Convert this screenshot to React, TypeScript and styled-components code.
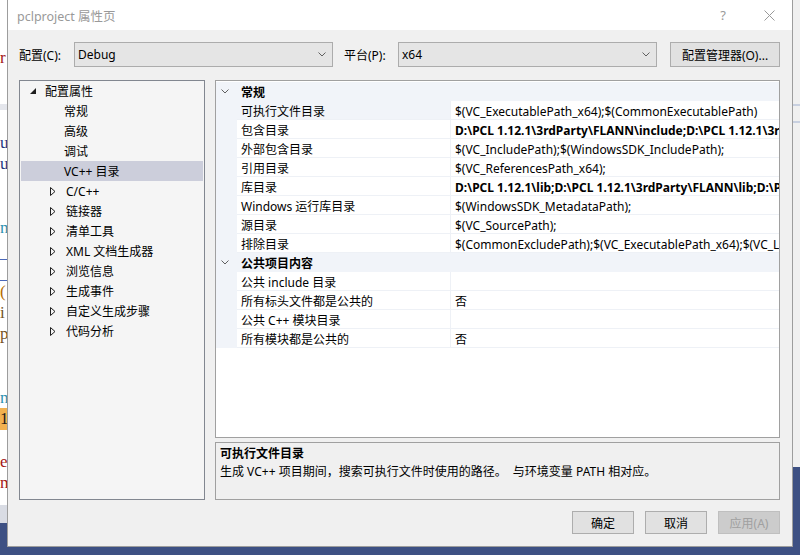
import * as React from 'react';
import styled, { createGlobalStyle } from 'styled-components';

const GlobalStyle = createGlobalStyle`
  html, body {
    margin: 0;
    padding: 0;
  }
  body {
    width: 800px;
    height: 555px;
    overflow: hidden;
    font-family: 'Noto Sans', 'Noto Sans CJK SC', sans-serif;
    font-size: 12px;
    color: #000;
  }
`;

const Screen = styled.div`
  width: 800px;
  height: 555px;
  display: grid;
  grid-template-columns: 7px 786px 7px;
  grid-template-rows: 547px 8px;
  background: #3d5083;
  overflow: hidden;
`;

// the code editor showing behind the dialog on the left
const EditorPeek = styled.div`
  display: flex;
  flex-direction: column;
  padding-top: 47px;
  overflow: hidden;
  background: linear-gradient(
    to bottom,
    #ffffff 0,
    #ffffff 104px,
    #e4e6ec 104px,
    #e4e6ec 110px,
    #ffffff 110px,
    #ffffff 505px,
    #d9dce4 505px,
    #d9dce4 523px,
    #3d5083 523px
  );
`;

const CodeLine = styled.div<{ $color?: string; $mark?: boolean; $rule?: boolean }>`
  flex: 0 0 21.25px;
  height: 21.25px;
  line-height: 21.25px;
  font-family: 'Liberation Serif', serif;
  font-size: 17px;
  color: ${p => p.$color || '#000'};
  background: ${p => (p.$mark ? '#f2b14f' : 'transparent')};
  box-shadow: ${p => (p.$rule ? 'inset 0 -1px 0 #4a67b8' : 'none')};
  white-space: nowrap;
`;

const DesktopEdge = styled.div`
  background: linear-gradient(
    to bottom,
    #f0f0f0 0,
    #f0f0f0 104px,
    #c8d0e0 104px,
    #c8d0e0 106px,
    #f0f0f0 106px,
    #f0f0f0 121px,
    #c8d0e0 121px,
    #c8d0e0 123px,
    #f0f0f0 123px,
    #f0f0f0 467px,
    #3d5083 467px
  );
`;

const Dialog = styled.div`
  box-sizing: border-box;
  display: flex;
  flex-direction: column;
  background: #f0f0f0;
  border: 1px solid #9d9d9d;
  border-top: none;
`;

const TitleBar = styled.div`
  height: 30px;
  flex: 0 0 30px;
  display: flex;
  align-items: center;
  background: #fff;
  padding-left: 9px;
`;

const Title = styled.div`
  flex: 1;
  font-size: 12.5px;
  color: #999;
`;

const CaptionButton = styled.div`
  width: 46px;
  height: 30px;
  display: flex;
  align-items: center;
  justify-content: center;
  color: #999;
  font-size: 13px;
`;

const Body = styled.div`
  flex: 1;
  display: flex;
  flex-direction: column;
  padding: 12px 12px 0 11px;
`;

const Toolbar = styled.div`
  display: flex;
  align-items: center;
  height: 25px;
`;

const FieldLabel = styled.div<{ $width: number; $gap?: number }>`
  width: ${p => p.$width}px;
  margin-left: ${p => p.$gap || 0}px;
  white-space: nowrap;
`;

const Combo = styled.div`
  box-sizing: border-box;
  width: 259px;
  height: 25px;
  display: flex;
  align-items: center;
  justify-content: space-between;
  padding: 0 6px 0 3px;
  background: #e5e5e5;
  border: 1px solid #acacac;
`;

const Button = styled.div<{ $width: number; $height?: number; $gap?: number; $disabled?: boolean }>`
  box-sizing: border-box;
  width: ${p => p.$width}px;
  height: ${p => p.$height || 25}px;
  margin-left: ${p => p.$gap || 0}px;
  display: flex;
  align-items: center;
  justify-content: center;
  background: ${p => (p.$disabled ? '#cccccc' : '#e1e1e1')};
  border: 1px solid ${p => (p.$disabled ? '#bfbfbf' : '#adadad')};
  color: ${p => (p.$disabled ? '#a0a0a0' : '#000')};
  white-space: nowrap;
`;

const Main = styled.div`
  margin-top: 13px;
  height: 420px;
  display: flex;
  gap: 10px;
`;

const Tree = styled.div`
  box-sizing: border-box;
  width: 186px;
  border: 1px solid #828790;
  background: #f5f5f5;
  padding: 0 1px;
`;

const TreeItem = styled.div<{ $indent: number; $selected?: boolean }>`
  height: 20px;
  display: flex;
  align-items: center;
  padding-left: ${p => p.$indent}px;
  background: ${p => (p.$selected ? '#cccedb' : 'transparent')};
  white-space: nowrap;
`;

const Expander = styled.div`
  width: 16px;
  height: 20px;
  display: flex;
  align-items: center;
`;

const RightColumn = styled.div`
  flex: 1;
  display: flex;
  flex-direction: column;
  gap: 4px;
`;

const PropGrid = styled.div`
  box-sizing: border-box;
  height: 358px;
  border: 1px solid #a0a0a0;
  background: #fff;
  padding-top: 1px;
  overflow: hidden;
`;

const CategoryRow = styled.div`
  height: 19px;
  display: flex;
  align-items: center;
  background: #f1f4f9;
  font-weight: bold;
`;

const CategoryToggle = styled.div`
  width: 25px;
  display: flex;
  align-items: center;
  padding-left: 5px;
  box-sizing: border-box;
`;

const PropRow = styled.div`
  height: 19px;
  display: grid;
  grid-template-columns: 21px 214px 1fr;
`;

const Gutter = styled.div`
  background: #f1f4f9;
`;

const NameCell = styled.div<{ $selected?: boolean }>`
  box-sizing: border-box;
  padding: 3px 0 0 4px;
  line-height: 16px;
  background: ${p => (p.$selected ? '#f1f4f9' : '#fff')};
  border-bottom: 1px solid #eef1f6;
  border-right: 1px solid #eef1f6;
  white-space: nowrap;
  overflow: hidden;
`;

const ValueCell = styled.div<{ $bold?: boolean }>`
  box-sizing: border-box;
  padding: 3px 0 0 4px;
  line-height: 16px;
  border-bottom: 1px solid #eef1f6;
  font-weight: ${p => (p.$bold ? 'bold' : 'normal')};
  white-space: nowrap;
  overflow: hidden;
`;

const Description = styled.div`
  box-sizing: border-box;
  height: 58px;
  border: 1px solid #a0a0a0;
  background: #f0f0f0;
  padding: 2px 4px;
  line-height: 18px;
`;

const DescTitle = styled.div`
  font-weight: bold;
`;

const DescText = styled.div`
  white-space: pre;
`;

const Footer = styled.div`
  display: flex;
  justify-content: flex-end;
  gap: 11px;
  padding-top: 11px;
`;

const ChevronDown = ({ size = 8 }: { size?: number }) => (
  <svg width={size} height={size / 2 + 1} viewBox="0 0 8 5">
    <path d="M0.5 0.5 L4 4 L7.5 0.5" fill="none" stroke="#606060" strokeWidth="1" />
  </svg>
);

const CollapsedArrow = () => (
  <svg width="6" height="9" viewBox="0 0 6 9">
    <path d="M0.5 0.5 L5 4.5 L0.5 8.5 Z" fill="none" stroke="#1e1e1e" strokeWidth="1" />
  </svg>
);

const ExpandedArrow = () => (
  <svg width="7" height="7" viewBox="0 0 7 7" style={{ marginLeft: 1 }}>
    <path d="M6 0 L6 6 L0 6 Z" fill="#1e1e1e" />
  </svg>
);

const CloseGlyph = () => (
  <svg width="11" height="11" viewBox="0 0 11 11">
    <path d="M0.5 0.5 L10.5 10.5 M10.5 0.5 L0.5 10.5" stroke="#999" strokeWidth="1" />
  </svg>
);

const codeLines: { ch: string; color?: string; mark?: boolean; rule?: boolean }[] = [
  { ch: 'r', color: '#a31515' },
  { ch: '' },
  { ch: '' },
  { ch: '' },
  { ch: 'u', color: '#1f377f' },
  { ch: 'u', color: '#1f377f' },
  { ch: '' },
  { ch: '' },
  { ch: 'n', color: '#2b91af' },
  { ch: '', rule: true },
  { ch: '', rule: true },
  { ch: '(', color: '#b36b00' },
  { ch: 'i', color: '#74531f' },
  { ch: 'p', color: '#74531f' },
  { ch: '' },
  { ch: '' },
  { ch: 'n', color: '#2b91af' },
  { ch: '1', color: '#1e1e1e', mark: true },
  { ch: '' },
  { ch: 'e', color: '#a31515' },
  { ch: 'm', color: '#a31515' },
];

const treeChildren = ['常规', '高级', '调试', 'VC++ 目录'];
const treeGroups = [
  'C/C++',
  '链接器',
  '清单工具',
  'XML 文档生成器',
  '浏览信息',
  '生成事件',
  '自定义生成步骤',
  '代码分析',
];

type Prop = { name: string; value: string; bold?: boolean };

const generalProps: Prop[] = [
  { name: '可执行文件目录', value: '$(VC_ExecutablePath_x64);$(CommonExecutablePath)' },
  {
    name: '包含目录',
    value: 'D:\\PCL 1.12.1\\3rdParty\\FLANN\\include;D:\\PCL 1.12.1\\3rdParty\\Boost\\include',
    bold: true,
  },
  { name: '外部包含目录', value: '$(VC_IncludePath);$(WindowsSDK_IncludePath);' },
  { name: '引用目录', value: '$(VC_ReferencesPath_x64);' },
  {
    name: '库目录',
    value: 'D:\\PCL 1.12.1\\lib;D:\\PCL 1.12.1\\3rdParty\\FLANN\\lib;D:\\PCL 1.12.1\\3rdParty',
    bold: true,
  },
  { name: 'Windows 运行库目录', value: '$(WindowsSDK_MetadataPath);' },
  { name: '源目录', value: '$(VC_SourcePath);' },
  {
    name: '排除目录',
    value: '$(CommonExcludePath);$(VC_ExecutablePath_x64);$(VC_LibraryPath_x64)',
  },
];

const publicProps: Prop[] = [
  { name: '公共 include 目录', value: '' },
  { name: '所有标头文件都是公共的', value: '否' },
  { name: '公共 C++ 模块目录', value: '' },
  { name: '所有模块都是公共的', value: '否' },
];

const Category = ({ title, props, selected }: { title: string; props: Prop[]; selected?: string }) => (
  <>
    <CategoryRow>
      <CategoryToggle>
        <ChevronDown />
      </CategoryToggle>
      {title}
    </CategoryRow>
    {props.map(p => (
      <PropRow key={p.name}>
        <Gutter />
        <NameCell $selected={p.name === selected}>{p.name}</NameCell>
        <ValueCell $bold={p.bold}>{p.value}</ValueCell>
      </PropRow>
    ))}
  </>
);

export default function App() {
  return (
    <>
      <GlobalStyle />
      <Screen>
        <EditorPeek>
          {codeLines.map((l, i) => (
            <CodeLine key={i} $color={l.color} $mark={l.mark} $rule={l.rule}>
              {l.ch}
            </CodeLine>
          ))}
        </EditorPeek>

        <Dialog>
          <TitleBar>
            <Title>pclproject 属性页</Title>
            <CaptionButton>?</CaptionButton>
            <CaptionButton>
              <CloseGlyph />
            </CaptionButton>
          </TitleBar>

          <Body>
            <Toolbar>
              <FieldLabel $width={55}>配置(C):</FieldLabel>
              <Combo>
                <span>Debug</span>
                <ChevronDown />
              </Combo>
              <FieldLabel $width={54} $gap={11}>
                平台(P):
              </FieldLabel>
              <Combo>
                <span>x64</span>
                <ChevronDown />
              </Combo>
              <Button $width={110} $gap={13}>
                配置管理器(O)...
              </Button>
            </Toolbar>

            <Main>
              <Tree>
                <TreeItem $indent={8}>
                  <Expander>
                    <ExpandedArrow />
                  </Expander>
                  配置属性
                </TreeItem>
                {treeChildren.map(t => (
                  <TreeItem key={t} $indent={43} $selected={t === 'VC++ 目录'}>
                    {t}
                  </TreeItem>
                ))}
                {treeGroups.map(t => (
                  <TreeItem key={t} $indent={29}>
                    <Expander>
                      <CollapsedArrow />
                    </Expander>
                    {t}
                  </TreeItem>
                ))}
              </Tree>

              <RightColumn>
                <PropGrid>
                  <Category title="常规" props={generalProps} selected="可执行文件目录" />
                  <Category title="公共项目内容" props={publicProps} />
                </PropGrid>
                <Description>
                  <DescTitle>可执行文件目录</DescTitle>
                  <DescText>生成 VC++ 项目期间，搜索可执行文件时使用的路径。  与环境变量 PATH 相对应。</DescText>
                </Description>
              </RightColumn>
            </Main>

            <Footer>
              <Button $width={62} $height={23}>确定</Button>
              <Button $width={62} $height={23}>取消</Button>
              <Button $width={62} $height={23} $disabled>
                应用(A)
              </Button>
            </Footer>
          </Body>
        </Dialog>

        <DesktopEdge />
      </Screen>
    </>
  );
}
